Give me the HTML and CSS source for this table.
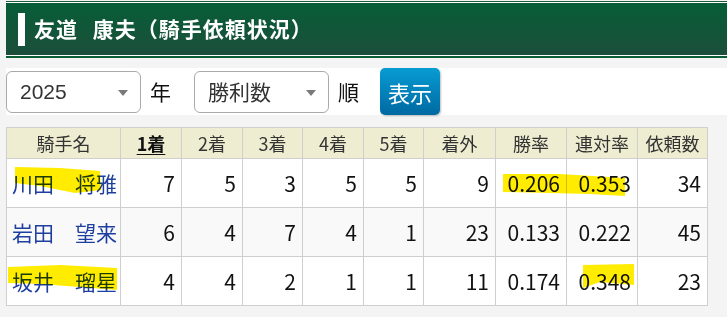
FILE: index.html
```html
<!DOCTYPE html>
<html lang="ja">
<head>
<meta charset="utf-8">
<title>友道 康夫(騎手依頼状況)</title>
<link rel="stylesheet" href="styles.css">
</head>
<body>
<div class="page">
  <header class="title-bar">
    <div class="title-inner">
      <span class="title-mark"></span>
      <h1 class="title">友道 康夫（騎手依頼状況）</h1>
    </div>
  </header>

  <form class="filter">
    <div class="select">
      <span class="select-value">2025</span>
      <span class="select-arrow"></span>
    </div>
    <span class="filter-label">年</span>
    <div class="select select-order">
      <span class="select-value">勝利数</span>
      <span class="select-arrow"></span>
    </div>
    <span class="filter-label">順</span>
    <button type="button" class="btn">表示</button>
  </form>

  <div class="table-wrap">
    <table class="stats">
      <colgroup>
        <col class="c-name"><col class="c-n"><col class="c-n"><col class="c-n3"><col class="c-n"><col class="c-n3"><col class="c-out"><col class="c-rate"><col class="c-rate"><col class="c-req">
      </colgroup>
      <thead>
        <tr>
          <th>騎手名</th>
          <th><a class="sort" href="#">1着</a></th>
          <th>2着</th>
          <th>3着</th>
          <th>4着</th>
          <th>5着</th>
          <th>着外</th>
          <th>勝率</th>
          <th>連対率</th>
          <th>依頼数</th>
        </tr>
      </thead>
      <tbody>
        <tr>
          <td class="name"><a href="#">川田　将雅</a></td>
          <td>7</td><td>5</td><td>3</td><td>5</td><td>5</td><td>9</td><td>0.206</td><td>0.353</td><td>34</td>
        </tr>
        <tr class="alt">
          <td class="name"><a href="#">岩田　望来</a></td>
          <td>6</td><td>4</td><td>7</td><td>4</td><td>1</td><td>23</td><td>0.133</td><td>0.222</td><td>45</td>
        </tr>
        <tr>
          <td class="name"><a href="#">坂井　瑠星</a></td>
          <td>4</td><td>4</td><td>2</td><td>1</td><td>1</td><td>11</td><td>0.174</td><td>0.348</td><td>23</td>
        </tr>
      </tbody>
    </table>
    <svg class="marks" width="701" height="178" viewBox="0 0 701 178" aria-hidden="true">
      <polygon points="9,40 54,41 94,44 95,63 69,66 34,59 9,56"/>
      <polygon points="2,140 54,138 111,141 111,163 74,160 34,157 2,156"/>
      <polygon points="497,47 554,47 619,51 619,69 584,67 497,65"/>
      <polygon points="577,138 628,137 628,158 594,155 577,161"/>
    </svg>
  </div>
</div>
</body>
</html>
```

FILE: styles.css
```css
html, body {
  margin: 0;
  padding: 0;
  background: #f4f4f4;
}
body {
  font-family: "Noto Sans CJK JP", "Liberation Sans", sans-serif;
  color: #111;
}
.page {
  padding: 1px 0 0 6px;
}

/* title bar */
.title-bar {
  border-top: 1px solid #1d5a3c;
  border-bottom: 2px solid #0b5d36;
  background: #fff;
  padding: 1px 0;
}
.title-inner {
  height: 52px;
  background: linear-gradient(#065d37, #1c4f3a);
  display: flex;
  align-items: center;
  padding-left: 12px;
}
.title-mark {
  width: 7px;
  height: 33px;
  background: #fff;
  margin-right: 9px;
}
.title {
  margin: 0;
  color: #fff;
  font-size: 21px;
  font-weight: 700;
  word-spacing: 9px;
  letter-spacing: 1px;
  line-height: 1;
  margin-top: -2px;
}

/* filter row */
.filter {
  margin-top: 10px;
  height: 47px;
  background: #fff;
  display: flex;
  align-items: center;
}
.select {
  box-sizing: border-box;
  width: 135px;
  height: 42px;
  border: 1px solid #aaa;
  border-radius: 6px;
  background: #fff;
  display: flex;
  align-items: center;
  justify-content: space-between;
  padding: 0 12px 0 13px;
}
.select-value {
  font-size: 21px;
  color: #333;
  line-height: 1;
}
.select .select-value:first-child {
  font-family: "Liberation Sans", "Noto Sans CJK JP", sans-serif;
}
.select-order .select-value:first-child {
  font-family: "Noto Sans CJK JP", sans-serif;
}
.select-arrow {
  width: 0;
  height: 0;
  border-left: 5px solid transparent;
  border-right: 5px solid transparent;
  border-top: 6px solid #7a7a7a;
  margin-top: 2px;
}
.filter-label {
  font-size: 21px;
  margin: 0 23px 0 9px;
  line-height: 1;
}
.btn {
  width: 60px;
  height: 47px;
  border: 0;
  border-radius: 5px;
  background: linear-gradient(#079cd3, #0069a2);
  box-shadow: 1px 1px 2px rgba(0,0,0,0.25);
  color: #fff;
  font-family: "Noto Sans CJK JP", sans-serif;
  font-size: 22px;
  padding: 0;
  line-height: 1;
  margin-left: -2px;
}

/* table */
.table-wrap {
  position: relative;
  margin-top: 12px;
  width: 701px;
}
.stats {
  table-layout: fixed;
  width: 701px;
  border-collapse: collapse;
  background: #fff;
}
.c-name { width: 114px; }
.c-n { width: 61px; }
.c-n3 { width: 60px; }
.c-out { width: 72px; }
.c-rate { width: 71px; }
.c-req { width: 70px; }

.stats th, .stats td {
  border: 1px solid #cfcfcf;
  padding: 0 6px;
}
.stats thead tr { height: 31px; }
.stats th {
  background: #efedd1;
  font-weight: 400;
  font-size: 18px;
  color: #333;
  text-align: center;
  line-height: 1;
  padding: 0 2px;
  white-space: nowrap;
}
.sort {
  color: #111;
  font-weight: 700;
  text-decoration: underline;
  text-underline-offset: 3px;
}
.stats tbody tr { height: 49px; }
.stats tbody tr.alt { background: #f9f9f9; }
.stats td {
  text-align: right;
  font-size: 21px;
  line-height: 1;
  color: #111;
}
.stats td.name {
  text-align: left;
  padding: 0 0 0 5px;
  white-space: nowrap;
}
.name a {
  color: #1e3f9f;
  text-decoration: none;
  font-size: 21px;
}

.marks {
  position: absolute;
  left: 0;
  top: 0;
  mix-blend-mode: multiply;
  pointer-events: none;
}
.marks polygon {
  fill: #ffec00;
}
```
